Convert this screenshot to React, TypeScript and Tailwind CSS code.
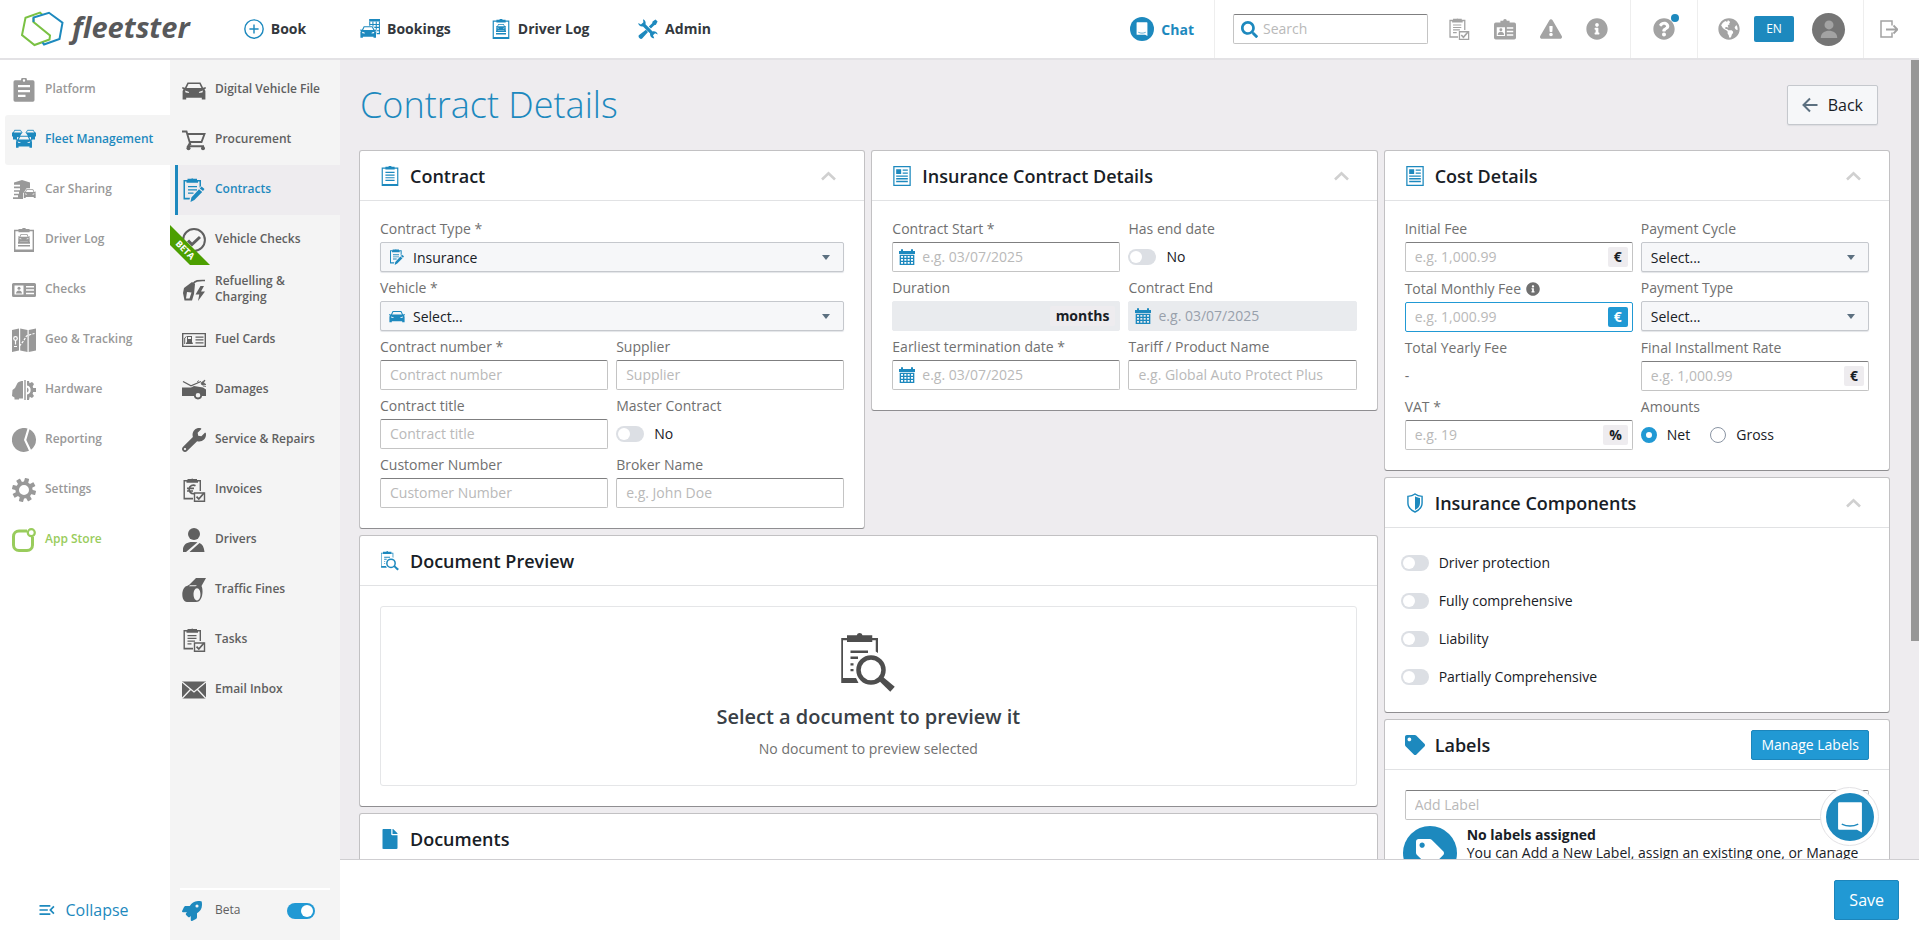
import { useId, useState, type ReactNode } from "react";
import {
  FaExclamationTriangle,
  FaFile,
  FaGlobeAmericas,
  FaInfoCircle,
  FaQuestionCircle,
  FaRocket,
  FaSearch,
  FaTag,
  FaWrench,
} from "react-icons/fa";
import { MdMenuOpen } from "react-icons/md";

interface IconProps {
  className?: string;
}

function Svg({ className = "size-6", children }: { className?: string; children: ReactNode }) {
  return (
    <svg className={`shrink-0 ${className}`} viewBox="0 0 24 24" fill="currentColor" aria-hidden="true">
      {children}
    </svg>
  );
}

const CAR_PATH =
  "M5.5 4.5h13l2.6 5.3 2.6-.7v1.7l-1.2.5.9 1.7v8.5h-3.6v-1.8H4.2v1.8H.6V13l.9-1.7-1.2-.5V9.1l2.6.7zM6.5 6 4.6 9.9h14.8L17.5 6zM3 12.6l.6 2 3.6.4-.6-1.3zM21 12.6l-.6 2-3.6.4.6-1.3z";

function CarIcon({ className }: IconProps) {
  return (
    <Svg className={className}>
      <path fillRule="evenodd" d={CAR_PATH} />
    </Svg>
  );
}

function FleetIcon({ className }: IconProps) {
  return (
    <Svg className={className}>
      <path d="M2.500 2.300h6l1.500 2.500M15.500 2.300h6M14 4.800l1.500-2.500M1.200 5l1.500-2.700M22.800 5l-1.500-2.700" fill="none" stroke="currentColor" strokeWidth=".9" />
      <path d="M0 4.500h10.500L9 6.500 7.500 9.500 5 9v2.500H1V9L0 8zM24 4.500H13.500L15 6.500l1.500 3 2.500-.500v2.500h4V9l1-1z" />
      <path fillRule="evenodd" transform="translate(3.600 4.600) scale(.7)" d={CAR_PATH} />
    </Svg>
  );
}

function BookingsIcon({ className }: IconProps) {
  return (
    <Svg className={className}>
      <path d="M11 0h13v3H11z" />
      <path d="M11.700 3v6M23.300 3v15M15.500 3v6M19.500 3v15M11 6.500h12.500M11 10h12.500M18 14h6M18 17.500h6" fill="none" stroke="currentColor" strokeWidth="1.3" />
      <path d="M0 11 4 8h11l5 5v10H0z" fill="#fff" />
      <path fillRule="evenodd" transform="translate(0 5) scale(.82)" d={CAR_PATH} />
    </Svg>
  );
}

function CarSharingIcon({ className }: IconProps) {
  return (
    <Svg className={className}>
      <path d="M2 4.500 10 2l8 2.500v5.700h-3.500l-2.500 4-1 1V21H1v-1.800h5v-2H2v-1.500h5v-2H2v-1.500h6v-2H2V8.500h6v-1.700H2z" />
      <path fillRule="evenodd" transform="translate(11.500 8.800) scale(.52)" d={CAR_PATH} />
    </Svg>
  );
}

function ClipboardSolidIcon({ className }: IconProps) {
  return (
    <Svg className={className}>
      <path fillRule="evenodd" d="M3.500 2.200H9a3 3 0 0 1 6 0h5.500A1.800 1.800 0 0 1 22.500 4v18a1.800 1.800 0 0 1-2 1.800h-17a1.800 1.800 0 0 1-2-1.800V4a1.800 1.800 0 0 1 2-1.800zM12 1.300a1.200 1.200 0 1 0 0 2.400 1.200 1.200 0 0 0 0-2.400zM6 7v2.300h12V7zm0 5v2.300h12V12zm0 4.800v2.300h7.500v-2.300z" />
    </Svg>
  );
}

/* Outlined clipboard, the base of many icons in the menus */
function ClipBase({ narrow = false }: { narrow?: boolean }) {
  return narrow ? (
    <path d="M1.500 2h4V.900h3.700a1.500 1.500 0 0 1 2 0H15V2h4v11h-1.400V3.500H16v1.300H4.500V3.500H2.900v16.300H11v1.700H1.500z" />
  ) : (
    <path fillRule="evenodd" d="M2 1.800h4.500V1H10a2.200 2.200 0 0 1 4 0h3.500v.800H22V24H2zM3.400 3.300v18.200h17.200V3.300h-3v1H6.500v-1z" />
  );
}

function ClipboardIcon({ className }: IconProps) {
  return (
    <Svg className={className}>
      <ClipBase />
      <path d="M6.500 7h11v1.400h-11zm0 3.200h11v1.400h-11zm0 3.200h11v1.400h-11zm0 3.200h11V18h-11z" />
    </Svg>
  );
}

function DriverLogIcon({ className }: IconProps) {
  return (
    <Svg className={className}>
      <ClipBase />
      <path fillRule="evenodd" transform="translate(6 3.800) scale(.5)" d={CAR_PATH} />
      <path d="M6 14h12v1.700H6zm0 2.900h12v1.700H6z" />
    </Svg>
  );
}

function ContractIcon({ className }: IconProps) {
  return (
    <Svg className={className}>
      <path d="M1.500 2h4V.800h3.600a1.500 1.500 0 0 1 2.200 0H15V2h4v6l-1.500 1.700V3.500H16v1.200H4.500V3.500H3v16.300h5l-.500 1.800h-6z" />
      <path d="M6 8h9v1.300H6zm0 3.200h9v1.300H6zm0 3.200h5.500v1.300H6z" />
      <path d="m19.500 8.500 3 2.500-1.500 2-3.200-2.600zM17 11.300l3.200 2.600-7.800 8-3.900 2 .900-4.500z" />
    </Svg>
  );
}

function TasksIcon({ className }: IconProps) {
  return (
    <Svg className={className}>
      <ClipBase narrow />
      <path d="M5.500 7h9v1.300h-9zm0 2.700h9V11h-9zm0 2.700h7.500v1.300h-7.500zm0 2.800h4v1.300h-4z" />
      <path d="M12.500 15h10v8.300h-10z" fill="none" stroke="currentColor" strokeWidth="1.400" />
      <path d="m14.500 18.600 2.300 2.400 5.200-6" fill="none" stroke="currentColor" strokeWidth="1.800" />
    </Svg>
  );
}

function InvoiceIcon({ className }: IconProps) {
  return (
    <Svg className={className}>
      <ClipBase narrow />
      <path d="M13.500 7.700a4.300 4.300 0 1 0-1.500 8M5 10.300h7M5 13h6" fill="none" stroke="currentColor" strokeWidth="1.700" />
      <path d="M12.500 15h10v8.300h-10z" fill="none" stroke="currentColor" strokeWidth="1.400" />
      <path d="m14.500 18.600 2.300 2.400 5.200-6" fill="none" stroke="currentColor" strokeWidth="1.800" />
    </Svg>
  );
}

function PreviewIcon({ className }: IconProps) {
  return (
    <Svg className={className}>
      <path d="M1.300 2h2.300V.900h3.900a1.200 1.200 0 0 1 2.300 0h3.900V2H16v6l-.900-.600V2.900h-1.400v.700H3.600v-.700H2V18h5.200l1 2H1.300z" />
      <path d="M5 7h7v1H5zm0 2.400h3v1H5zm0 2.700h1.200v.900H5zm0 2.300h1.200v.900H5z" />
      <circle cx="13.200" cy="14.800" r="5" fill="none" stroke="currentColor" strokeWidth="1.800" />
      <path d="m16.300 19 1.600-1.500 4.800 4-1.800 2z" />
    </Svg>
  );
}

function IdCardIcon({ className }: IconProps) {
  return (
    <Svg className={className}>
      <path fillRule="evenodd" d="M1.500 5h21A1.500 1.500 0 0 1 24 6.500v11a1.500 1.500 0 0 1-1.500 1.500h-21A1.500 1.500 0 0 1 0 17.500v-11A1.500 1.500 0 0 1 1.500 5zM2.500 7.500v9h9v-9zM14 8v1.500h8V8zm0 3.300v1.500h8v-1.500zm0 3.400v1.500h8v-1.500z" />
      <circle cx="7" cy="10.300" r="1.500" />
      <path d="M4 15.500c0-4 6-4 6 0z" />
    </Svg>
  );
}

function BadgeIcon({ className }: IconProps) {
  return (
    <Svg className={className}>
      <path fillRule="evenodd" d="M2 5h5V3h3a2 2 0 0 1 4 0h3v2h5a2 2 0 0 1 2 2v14.500a2 2 0 0 1-2 2H2a2 2 0 0 1-2-2V7a2 2 0 0 1 2-2zm1 5v9.500h9V10zm11 0v1.600h7V10zm0 3.900v1.600h7v-1.600zm0 3.900v1.600h7v-1.600z" />
      <circle cx="7.500" cy="12.800" r="1.600" />
      <path d="M4 18.500c0-4.500 7-4.500 7 0z" />
    </Svg>
  );
}

function MapIcon({ className }: IconProps) {
  return (
    <Svg className={className}>
      <path d="m0 2 7-1.500v22L0 24zM8.200.500 15.500 2v22l-7.300-1.500zM16.700 2 24 .500v22L16.700 24z" />
      <circle cx="3.500" cy="10.500" r="1.800" fill="none" stroke="#fff" strokeWidth="1.200" />
      <path d="M3.500 12.300v4.200M2 18.500h3" stroke="#fff" strokeWidth="1.200" />
      <path d="m7.500 18 4-5 3-5 4-1.500 4-1" fill="none" stroke="#fff" strokeWidth="1.200" strokeDasharray="2.500 1.200" />
    </Svg>
  );
}

function HardwareIcon({ className }: IconProps) {
  return (
    <Svg className={className}>
      <path d="M11 3v17.500H7v1H2.500v-2L0 18l.500-6L3 10l2.500-5C7 3.500 9 3 11 3zM12.300 2h1.400v20h-1.400z" />
      <path fillRule="evenodd" d="M15 3h2l.500 2.300L20 4l2 2-1.300 2.500L21.200 10H24v4h-2.800l-.600 1.700L22 18l-2 2-2.300-1.200L17 22h-2v-5.500a4.600 4.600 0 0 0 0-9z" />
      <path d="M15 9.500a2.700 2.700 0 0 1 0 5z" />
    </Svg>
  );
}

function PieIcon({ className }: IconProps) {
  return (
    <Svg className={className}>
      <path d="M15.500.500A12 12 0 1 0 17 22.800L12 12zM17.500 1.300A12 12 0 0 1 19 21.700L14.300 12z" />
    </Svg>
  );
}

function GearIcon({ className }: IconProps) {
  return (
    <Svg className={className}>
      <circle cx="12" cy="12" r="6.800" fill="none" stroke="currentColor" strokeWidth="3.600" />
      {[15, 60, 105, 150, 195, 240, 285, 330].map((angle) => (
        <rect key={angle} x="9.800" y="0" width="4.400" height="5" rx=".6" transform={`rotate(${angle} 12 12)`} />
      ))}
    </Svg>
  );
}

function AppStoreIcon({ className }: IconProps) {
  return (
    <Svg className={className}>
      <path d="M15 3H7a5.500 5.500 0 0 0-5.500 5.500V17A5.500 5.500 0 0 0 7 22.500h8a5.500 5.500 0 0 0 5.500-5.500V9" fill="none" stroke="currentColor" strokeWidth="3" />
      <circle cx="19.300" cy="4.700" r="3.500" fill="none" stroke="currentColor" strokeWidth="2.200" />
    </Svg>
  );
}

function CartIcon({ className }: IconProps) {
  return (
    <Svg className={className}>
      <path d="M0 3.500h4.500l4 13.500M6 6h16.500l-3 8H8M8.500 14 6 18.200h16" fill="none" stroke="currentColor" strokeWidth="1.900" />
      <circle cx="6.500" cy="20.300" r="2" />
      <circle cx="21" cy="20.300" r="2" />
    </Svg>
  );
}

function CheckCircleIcon({ className }: IconProps) {
  return (
    <Svg className={className}>
      <circle cx="12" cy="12" r="10.900" fill="none" stroke="currentColor" strokeWidth="2" />
      <path d="m6 12.500 4 4L18 9" fill="none" stroke="currentColor" strokeWidth="3" />
    </Svg>
  );
}

function FuelIcon({ className }: IconProps) {
  return (
    <Svg className={className}>
      <path d="M11 6c2-3.500 5-3.700 12-3.500" fill="none" stroke="currentColor" strokeWidth="1.600" />
      <path fillRule="evenodd" d="m2 10 8-6 3 2-1 10-2 6.500H2.500L1 15zm3 4-1 6.500h3.500l2-6z" />
      <path d="m18.500 8-5 8.500h3.800L16 23l7-9.500h-4l3-5.500z" />
    </Svg>
  );
}

function FuelCardIcon({ className }: IconProps) {
  return (
    <Svg className={className}>
      <path fillRule="evenodd" d="M0 5h24v14H0zm1.400 1.300v11.400h21.200V6.300zM5 8h5v6.500h.800V16H4v-1.500h1zm1 1v2h3V9zM13.500 8.500h8v1.300h-8zm0 2.800h8v1.300h-8zm0 2.900h8v1.300h-8z" />
      <path d="M4.500 8.500 2.700 10v6" fill="none" stroke="currentColor" />
    </Svg>
  );
}

function DamageIcon({ className }: IconProps) {
  return (
    <Svg className={className}>
      <path d="m1 3.500 8 4.300 10-4.300" fill="none" stroke="currentColor" strokeWidth="1.300" />
      <path d="M0 9.500h9L12 8l9 1.500 3 2v6.500h-4.600a3.500 3.500 0 0 0-7 0H0z" />
      <circle cx="16" cy="17.300" r="3.200" fill="#f4f4f4" stroke="currentColor" strokeWidth="1.800" />
      <path d="m19 5 4-3-1.500 3L24 6.500l-4 .500zM15 4l2-1.500M21 8l3 .500" stroke="currentColor" strokeWidth=".8" />
    </Svg>
  );
}

function DriverIcon({ className }: IconProps) {
  return (
    <Svg className={className}>
      <circle cx="12" cy="6" r="6" />
      <path d="M1 20.500C2 15.500 6 13.500 12 14l3.500.300L4 24H1zM17.500 15c3 1 4.500 4 5 9H7.500z" />
    </Svg>
  );
}

function FinesIcon({ className }: IconProps) {
  return (
    <Svg className={className}>
      <path fillRule="evenodd" d="M7.500 6.500 14 0h10l-4.500 8c2 3.500 1.500 16-5.500 16H5c-6.500 0-6-15 0-16zM8 7.200h7l-1.500 1.100H7zM15 10.200c-4.600 0-4.600 12.300 0 12.300s4.600-12.300 0-12.300z" />
    </Svg>
  );
}

function MailIcon({ className }: IconProps) {
  return (
    <Svg className={className}>
      <path d="M0 3.500h24v17H0z" />
      <path d="m0 4 12 10L24 4M0 20.500l8.500-9M24 20.500l-8.500-9" fill="none" stroke="#f4f4f4" strokeWidth="1.300" />
    </Svg>
  );
}

function NewsIcon({ className }: IconProps) {
  return (
    <Svg className={className}>
      <path fillRule="evenodd" d="M1.500 0h21v24h-21zM3 1.500v21h18v-21z" />
      <path d="M5 4h6v5.500H5zm7.800.200H19v1.600h-6.200zm0 3.500H19v1.600h-6.200zM5 11.300h14v1.700H5zm0 3.200h14v1.700H5zm0 3.300h14v1.700H5z" />
    </Svg>
  );
}

function CalendarIcon({ className }: IconProps) {
  return (
    <Svg className={className}>
      <path d="M0 3h3V.500h3V3h12V.500h3V3h3v4.500H0z" />
      <path fillRule="evenodd" d="M1 8.500h22V24H1zm2 2V13h3v-2.500zm5 0V13h3v-2.500zm5 0V13h3v-2.500zm5 0V13h3v-2.500zM3 15v2.500h3V15zm5 0v2.500h3V15zm5 0v2.500h3V15zm5 0v2.500h3V15zM3 19.500V22h3v-2.500zm5 0V22h3v-2.500zm5 0V22h3v-2.500zm5 0V22h3v-2.500z" />
    </Svg>
  );
}

function ShieldIcon({ className }: IconProps) {
  return (
    <Svg className={className}>
      <path d="M12 1.200c2.500 2 5 2.700 8.500 2.800v8c0 5-3.500 8.500-8.500 10.800C7 20.500 3.500 17 3.500 12V4C7 3.900 9.500 3.200 12 1.200z" fill="none" stroke="currentColor" strokeWidth="1.700" />
      <path d="M12 4c1.800 1.200 3.500 1.700 6 2v6c0 4-2.500 6.500-6 8.300z" />
    </Svg>
  );
}

function BookIcon({ className }: IconProps) {
  return (
    <Svg className={className}>
      <circle cx="12" cy="12" r="11" fill="none" stroke="currentColor" strokeWidth="1.700" />
      <path d="M12 6.500v11M6.500 12h11" stroke="currentColor" strokeWidth="1.700" />
    </Svg>
  );
}

function AdminIcon({ className }: IconProps) {
  return (
    <Svg className={className}>
      <path d="M6 .300C8.500 1.200 9.800 3.800 9 6.400L17.500 15c2.500-.800 5.300.600 6.200 3.500L20.500 17 18 19.500l1.500 3.500c-3 0-5.500-2.500-5-5.700L6 9C3.200 9.600.500 7.800.300 4.800L3.500 6.500 6.500 4z" />
      <path d="m21 .500 2.500 2.500-2 3.800-2 .700-4 4-2.500-2.500 4-4 .500-2zM9.500 13l2.500 2.500-7 8c-2 1.500-5.500-1.800-4-4z" />
    </Svg>
  );
}

function ChatGlyph({ className }: IconProps) {
  return (
    <Svg className={className}>
      <path fill="#fff" d="M6.200 4h11.600a.7.700 0 0 1 .7.700V20.500L15.800 19H6.200a.7.700 0 0 1-.7-.7V4.700a.7.700 0 0 1 .7-.7z" />
      <path d="M7.500 15.900c3 1.400 6 1.400 9 0" fill="none" stroke="#1d89be" strokeWidth=".8" />
    </Svg>
  );
}

function Logo() {
  return (
    <a href="#" className="flex items-center gap-2" aria-label="fleetster">
      <svg className="h-9 w-11" viewBox="0 0 44 36" fill="none" strokeWidth="2" aria-hidden="true">
        <path d="M22 3.500 20 1.600 5.500 6.800 2 24l12.500 10 15-5.500.500-4L13.500 11V7" stroke="#7ac143" />
        <path d="M13.500 11V6.500L29 1.800l13.500 10L39.500 28l-15.500 5.500-1.500-2" stroke="#1d89be" />
      </svg>
      <span className="pb-1 text-[29px] leading-8 font-bold text-[#58595b] italic">fleetster</span>
    </a>
  );
}

const topNav = [
  { label: "Book", icon: BookIcon },
  { label: "Bookings", icon: BookingsIcon },
  { label: "Driver Log", icon: DriverLogIcon },
  { label: "Admin", icon: AdminIcon },
];

const mainMenu = [
  { label: "Platform", icon: ClipboardSolidIcon },
  { label: "Fleet Management", icon: FleetIcon, active: true },
  { label: "Car Sharing", icon: CarSharingIcon },
  { label: "Driver Log", icon: DriverLogIcon },
  { label: "Checks", icon: IdCardIcon },
  { label: "Geo & Tracking", icon: MapIcon },
  { label: "Hardware", icon: HardwareIcon },
  { label: "Reporting", icon: PieIcon },
  { label: "Settings", icon: GearIcon },
];

const subMenu = [
  { label: "Digital Vehicle File", icon: CarIcon },
  { label: "Procurement", icon: CartIcon },
  { label: "Contracts", icon: ContractIcon, active: true },
  { label: "Vehicle Checks", icon: CheckCircleIcon, beta: true },
  { label: "Refuelling & Charging", icon: FuelIcon, wrap: true },
  { label: "Fuel Cards", icon: FuelCardIcon },
  { label: "Damages", icon: DamageIcon },
  { label: "Service & Repairs", icon: FaWrench },
  { label: "Invoices", icon: InvoiceIcon },
  { label: "Drivers", icon: DriverIcon },
  { label: "Traffic Fines", icon: FinesIcon },
  { label: "Tasks", icon: TasksIcon },
  { label: "Email Inbox", icon: MailIcon },
];

function Header() {
  return (
    <header className="flex h-[60px] shrink-0 items-center border-b-2 border-[#e3e2e5] bg-white">
      <div className="w-[210px] shrink-0 pl-5">
        <Logo />
      </div>
      <nav className="flex">
        {topNav.map(({ label, icon: Icon }) => (
          <a
            key={label}
            href="#"
            className="flex min-w-[130px] items-center justify-center gap-[7px] px-5 text-[14px] font-bold whitespace-nowrap text-[#33383d]"
          >
            <Icon className="size-5 text-[#1d89be]" />
            <span className="pb-0.5">{label}</span>
          </a>
        ))}
      </nav>

      <div className="ml-auto flex h-full items-stretch">
        <button className="flex items-center gap-[7px] pr-5 text-[14px] font-bold text-[#1d89be]">
          <span className="flex size-6 items-center justify-center rounded-full bg-[#1d89be]">
            <ChatGlyph className="size-5" />
          </span>
          Chat
        </button>
        <div className="flex items-center border-l border-[#eeeeee] pr-[22px] pl-[18px]">
          <div className="relative flex items-center">
            <FaSearch className="absolute left-2 size-[17px] text-[#1d89be]" />
            <input
              type="search"
              aria-label="Search"
              placeholder="Search"
              className="h-[30px] w-[195px] rounded-[2px] border border-[#c4c4c4] border-t-[#7f7f80] pb-0.5 pl-[29px] text-[14px] outline-none placeholder:text-[#b9b9b9]"
            />
          </div>
          <div className="ml-5 flex gap-6 text-[#a3a3a3]">
            <button aria-label="Tasks">
              <TasksIcon className="size-[22px]" />
            </button>
            <button aria-label="Licence checks">
              <BadgeIcon className="size-[22px]" />
            </button>
            <button aria-label="Alerts">
              <FaExclamationTriangle className="size-[22px]" />
            </button>
            <button aria-label="Information">
              <FaInfoCircle className="size-[22px]" />
            </button>
          </div>
        </div>
        <div className="flex items-center border-l border-[#eeeeee] px-[22px] text-[#a3a3a3]">
          <button aria-label="Help" className="relative">
            <FaQuestionCircle className="size-[22px]" />
            <span className="absolute -top-1 -right-1 size-2 rounded-full bg-[#1d89be]" />
          </button>
        </div>
        <div className="flex items-center border-l border-[#eeeeee] pr-[18px] pl-5">
          <FaGlobeAmericas className="size-[22px] text-[#a3a3a3]" />
          <button className="ml-[14px] h-[26px] w-10 rounded-[2px] bg-[#1d89be] text-[12px] text-white">EN</button>
          <button
            aria-label="Profile"
            className="ml-[18px] flex size-[33px] items-center justify-center rounded-full bg-[#757575] text-[#a3a3a3]"
          >
            <Svg className="size-[18px]">
              <circle cx="12" cy="6.500" r="6" />
              <path d="M1 24c0-13 22-13 22 0z" />
            </Svg>
          </button>
        </div>
        <div className="flex items-center border-l border-[#eeeeee] pr-[21px] pl-4 text-[#a3a3a3]">
          <button aria-label="Log out">
            <svg className="size-[18px]" viewBox="0 0 18 18" fill="none" stroke="currentColor" strokeWidth="1.500" aria-hidden="true">
              <path d="M12 5.500V1H1v16h11v-4.500" />
              <path d="M6 9.500h11M13.500 5.500l4 4-4 4" strokeWidth="1.800" />
            </svg>
          </button>
        </div>
      </div>
    </header>
  );
}

function Sidebar() {
  const [beta, setBeta] = useState(true);

  return (
    <aside className="flex shrink-0 text-[12px] leading-4 font-semibold">
      <div className="flex w-[170px] flex-col bg-white">
        <nav className="pt-[5px] pl-[5px]">
          {mainMenu.map(({ label, icon: Icon, active }) => (
            <a
              key={label}
              href="#"
              className={`flex h-[50px] items-center gap-[9px] rounded-l-[3px] pl-[7px] ${
                active ? "bg-[#f4f4f4] text-[#1d89be]" : "text-[#999999]"
              }`}
            >
              <Icon className="size-6" />
              <span className="pb-0.5">{label}</span>
            </a>
          ))}
          <a href="#" className="flex h-[50px] items-center gap-[9px] pl-[7px] text-[#99cc5c]">
            <AppStoreIcon className="size-6" />
            <span className="pb-0.5">App Store</span>
          </a>
        </nav>
        <button className="mt-auto flex h-[60px] items-center justify-center gap-2 pr-1 text-[16px] font-normal text-[#1d89be]">
          <MdMenuOpen className="size-5" />
          Collapse
        </button>
      </div>

      <div className="flex w-[170px] flex-col bg-[#f4f4f4]">
        <nav className="pt-[5px]">
          {subMenu.map(({ label, icon: Icon, active, beta: isBeta, wrap }) => (
            <a
              key={label}
              href="#"
              className={`relative flex h-[50px] items-center gap-[9px] overflow-hidden ${
                active
                  ? "ml-[5px] border-l-[3px] border-[#1d89be] bg-[#eeecef] pl-1 text-[#1d89be]"
                  : "pl-3 text-[#606060]"
              }`}
            >
              <Icon className="size-6 shrink-0" />
              <span className={`pb-0.5 ${wrap ? "w-20" : ""}`}>{label}</span>
              {isBeta && (
                <svg className="absolute top-2.5 left-0 h-10 w-10" viewBox="0 0 40 40" aria-hidden="true">
                  <path d="M0 0 40 40H20L0 20z" fill="#4c9f00" />
                  <text x="15" y="28" transform="rotate(45 15 25)" textAnchor="middle" fontSize="9" fontWeight="700" fill="#fff">
                    BETA
                  </text>
                </svg>
              )}
            </a>
          ))}
        </nav>
        <div className="mx-2.5 mt-auto flex h-[52px] items-center border-t-2 border-white pr-[15px] pb-2 pl-0.5 font-normal">
          <FaRocket className="size-5 text-[#1d89be]" />
          <label htmlFor="beta-switch" className="ml-[13px] flex-1 pb-0.5 text-[#606060]">
            Beta
          </label>
          <Switch id="beta-switch" checked={beta} onChange={setBeta} />
        </div>
      </div>
    </aside>
  );
}

interface SwitchProps {
  id: string;
  checked?: boolean;
  onChange?: (checked: boolean) => void;
}

function Switch({ id, checked, onChange }: SwitchProps) {
  return (
    <input
      id={id}
      type="checkbox"
      role="switch"
      checked={checked}
      onChange={(e) => onChange?.(e.target.checked)}
      className="h-4 w-7 shrink-0 appearance-none rounded-full bg-[#dcdfe4] p-0.5 before:block before:size-3 before:rounded-full before:bg-white before:content-[''] checked:bg-[#2199d4] checked:before:ml-3"
    />
  );
}

interface CardProps {
  title: string;
  icon: ReactNode;
  action?: ReactNode;
  children?: ReactNode;
  bodyClass?: string;
}

function Card({ title, icon, action, children, bodyClass = "p-5" }: CardProps) {
  return (
    <section className="rounded-[2px] bg-white shadow-[0_1px_0_0_#8f8e91,0_0_0_1px_#c2c1c3]">
      <header className="flex h-[50px] items-center border-b border-[#e1e2e4] px-5">
        <span className="flex w-5 justify-start text-[#1d89be]">{icon}</span>
        <h2 className="ml-2.5 flex-1 text-[18px] leading-6 font-semibold text-[#182026]">{title}</h2>
        {action}
      </header>
      <div className={bodyClass}>{children}</div>
    </section>
  );
}

function Chevron() {
  return (
    <button aria-label="Collapse section" className="mr-2 text-[#d0d0d0]">
      <svg className="h-2.5 w-[15px]" viewBox="0 0 15 10" fill="none" stroke="currentColor" strokeWidth="2.600" aria-hidden="true">
        <path d="m1 8.500 6.500-6.300L14 8.500" />
      </svg>
    </button>
  );
}

function FieldLabel({ id, children }: { id?: string; children: ReactNode }) {
  return (
    <label htmlFor={id} className="mb-[5px] block text-[14px] leading-4 text-[#707070]">
      {children}
    </label>
  );
}

interface FieldProps {
  label: string;
  placeholder?: string;
  date?: boolean;
  unit?: string;
  disabled?: boolean;
  focused?: boolean;
  info?: boolean;
}

function Field({ label, placeholder, date, unit, disabled, focused, info }: FieldProps) {
  const id = useId();
  const box = disabled
    ? "border-[#e9ebee] bg-[#e9ebee] placeholder:text-[#98a0ab]"
    : focused
      ? "border-[#2199d4] placeholder:text-[#b9b9b9]"
      : "border-[#c4c4c4] border-t-[#7f7f80] placeholder:text-[#b9b9b9]";

  return (
    <div>
      <FieldLabel id={id}>
        {info ? (
          <span className="flex h-[17px] items-center gap-[5px]">
            {label} <FaInfoCircle className="size-3.5 text-[#707070]" />
          </span>
        ) : (
          label
        )}
      </FieldLabel>
      <div className="relative">
        {date && <CalendarIcon className="absolute top-[7px] left-[7px] size-4 text-[#1d89be]" />}
        <input
          id={id}
          type="text"
          placeholder={placeholder}
          disabled={disabled}
          className={`h-[30px] w-full rounded-[2px] border pr-2 pb-0.5 text-[14px] outline-none ${date ? "pl-[29px]" : "pl-[9px]"} ${box}`}
        />
        {unit && (
          <span
            className={`absolute top-[5px] right-[5px] h-5 rounded-[2px] px-1.5 text-[14px] leading-5 font-bold ${
              focused ? "bg-[#2199d4] text-white" : "bg-[#eeecef] text-[#182026]"
            }`}
          >
            {unit}
          </span>
        )}
      </div>
    </div>
  );
}

function SelectField({ label, value, icon }: { label: string; value: string; icon?: ReactNode }) {
  const id = useId();
  return (
    <div>
      <FieldLabel id={id}>{label}</FieldLabel>
      <div className="relative">
        {icon && <span className="pointer-events-none absolute top-[7px] left-[9px] text-[#1d89be]">{icon}</span>}
        <select
          id={id}
          className={`block h-[30px] w-full appearance-none rounded-[2px] border border-[#c5c8cd] bg-[#f6f7f9] text-[14px] text-[#182026] shadow-[0_1px_1px_0_#e3e5e8] ${
            icon ? "pl-8" : "pl-[9px]"
          }`}
        >
          <option>{value}</option>
        </select>
        <span className="pointer-events-none absolute top-[13px] right-3.5 border-x-4 border-t-5 border-x-transparent border-t-[#5c7080]" />
      </div>
    </div>
  );
}

function SwitchField({ label }: { label: string }) {
  const id = useId();
  const [on, setOn] = useState(false);
  return (
    <div>
      <FieldLabel id={id}>{label}</FieldLabel>
      <div className="flex h-[30px] items-center gap-2.5">
        <Switch id={id} checked={on} onChange={setOn} />
        <span className="pb-0.5 text-[14px] text-[#182026]">{on ? "Yes" : "No"}</span>
      </div>
    </div>
  );
}

function ComponentSwitch({ label }: { label: string }) {
  const id = useId();
  const [on, setOn] = useState(false);
  return (
    <div className="flex h-[38px] items-center gap-2.5">
      <Switch id={id} checked={on} onChange={setOn} />
      <label htmlFor={id} className="pb-0.5 text-[14px] text-[#182026]">
        {label}
      </label>
    </div>
  );
}

function AmountsField() {
  const [amount, setAmount] = useState("Net");
  return (
    <fieldset>
      <legend className="mb-[5px] text-[14px] leading-4 text-[#707070]">Amounts</legend>
      <div className="flex h-[30px] items-center gap-5">
        {["Net", "Gross"].map((option) => (
          <label key={option} className="flex items-center gap-2.5 text-[14px] text-[#182026]">
            <input
              type="radio"
              name="amounts"
              checked={amount === option}
              onChange={() => setAmount(option)}
              className="size-4 appearance-none rounded-full border border-[#8a94a3] bg-white checked:border-5 checked:border-[#2199d4]"
            />
            <span className="pb-0.5">{option}</span>
          </label>
        ))}
      </div>
    </fieldset>
  );
}

export default function App() {
  return (
    <div className="flex h-screen flex-col overflow-hidden bg-[#eeecef] font-['Open_Sans',sans-serif]">
      <Header />
      <div className="flex min-h-0 flex-1">
        <Sidebar />
        <div className="relative flex min-w-0 flex-1 flex-col">
          <main className="min-h-0 flex-1 overflow-hidden pr-[30px] pl-5">
            <div className="flex h-[91px] items-center justify-between pr-[11px] pb-0.5">
              <h1 className="text-[36px] font-light text-[#1d89be]">Contract Details</h1>
              <button className="flex h-10 items-center gap-2.5 rounded-[2px] border border-[#c5c8cd] bg-[#f6f7f9] px-3.5 text-[16px] text-[#182026] shadow-[0_1px_1px_0_#dcdde0]">
                <svg className="size-4" viewBox="0 0 16 16" fill="none" stroke="#5c7080" strokeWidth="2" aria-hidden="true">
                  <path d="M15.500 8H1.500M8 1.500 1.500 8 8 14.500" />
                </svg>
                Back
              </button>
            </div>

            <div className="grid grid-cols-3 items-start gap-2">
              <div className="col-span-2 grid grid-cols-2 items-start gap-2">
                <Card title="Contract" icon={<ClipboardIcon className="size-5" />} action={<Chevron />}>
                  <div className="grid grid-cols-2 gap-2">
                    <div className="col-span-2">
                      <SelectField label="Contract Type *" value="Insurance" icon={<ContractIcon className="size-4" />} />
                    </div>
                    <div className="col-span-2">
                      <SelectField label="Vehicle *" value="Select..." icon={<CarIcon className="size-4" />} />
                    </div>
                    <Field label="Contract number *" placeholder="Contract number" />
                    <Field label="Supplier" placeholder="Supplier" />
                    <Field label="Contract title" placeholder="Contract title" />
                    <SwitchField label="Master Contract" />
                    <Field label="Customer Number" placeholder="Customer Number" />
                    <Field label="Broker Name" placeholder="e.g. John Doe" />
                  </div>
                </Card>

                <Card title="Insurance Contract Details" icon={<NewsIcon className="size-5" />} action={<Chevron />}>
                  <div className="grid grid-cols-2 gap-2">
                    <Field label="Contract Start *" placeholder="e.g. 03/07/2025" date />
                    <SwitchField label="Has end date" />
                    <Field label="Duration" unit="months" disabled />
                    <Field label="Contract End" placeholder="e.g. 03/07/2025" date disabled />
                    <Field label="Earliest termination date *" placeholder="e.g. 03/07/2025" date />
                    <Field label="Tariff / Product Name" placeholder="e.g. Global Auto Protect Plus" />
                  </div>
                </Card>

                <div className="col-span-2">
                  <Card title="Document Preview" icon={<PreviewIcon className="size-5" />}>
                    <div className="flex h-[180px] flex-col items-center justify-center rounded-[3px] border border-[#e5e6e8]">
                      <PreviewIcon className="size-[60px] text-[#4e4e4e]" />
                      <h3 className="mt-2.5 text-[20px] leading-7 font-semibold text-[#394046]">
                        Select a document to preview it
                      </h3>
                      <p className="mt-2 text-[14px] leading-5 text-[#707070]">No document to preview selected</p>
                    </div>
                  </Card>
                </div>
                <div className="col-span-2">
                  <Card title="Documents" icon={<FaFile className="size-5" />}>
                    <div className="h-20" />
                  </Card>
                </div>
              </div>

              <div className="flex flex-col gap-2">
                <Card title="Cost Details" icon={<NewsIcon className="size-5" />} action={<Chevron />}>
                  <div className="grid grid-cols-2 gap-2">
                    <Field label="Initial Fee" placeholder="e.g. 1,000.99" unit="€" />
                    <SelectField label="Payment Cycle" value="Select..." />
                    <Field label="Total Monthly Fee" placeholder="e.g. 1,000.99" unit="€" focused info />
                    <SelectField label="Payment Type" value="Select..." />
                    <div className="text-[14px] text-[#707070]">
                      <p className="mb-[5px] leading-4">Total Yearly Fee</p>
                      <p className="leading-[30px]">-</p>
                    </div>
                    <Field label="Final Installment Rate" placeholder="e.g. 1,000.99" unit="€" />
                    <Field label="VAT *" placeholder="e.g. 19" unit="%" />
                    <AmountsField />
                  </div>
                </Card>

                <Card
                  title="Insurance Components"
                  icon={<ShieldIcon className="size-5" />}
                  action={<Chevron />}
                  bodyClass="p-4"
                >
                  <ComponentSwitch label="Driver protection" />
                  <ComponentSwitch label="Fully comprehensive" />
                  <ComponentSwitch label="Liability" />
                  <ComponentSwitch label="Partially Comprehensive" />
                </Card>

                <Card
                  title="Labels"
                  icon={<FaTag className="size-5" />}
                  action={
                    <button className="h-[30px] rounded-[2px] border border-[#1c85bb] bg-[#2199d4] px-[9px] text-[14px] text-white">
                      Manage Labels
                    </button>
                  }
                >
                  <input
                    type="text"
                    aria-label="Add Label"
                    placeholder="Add Label"
                    className="block h-[30px] w-full rounded-[2px] border border-[#c4c4c4] border-t-[#7f7f80] pb-0.5 pl-[9px] text-[14px] outline-none placeholder:text-[#b9b9b9]"
                  />
                  <div className="mt-1.5 -ml-0.5 flex gap-2.5">
                    <span className="flex size-[54px] shrink-0 items-center justify-center rounded-full bg-[#1d89be] text-white">
                      <FaTag className="size-7" />
                    </span>
                    <p className="text-[14px] leading-[18px] text-[#182026]">
                      <strong className="block font-bold">No labels assigned</strong>
                      You can Add a New Label, assign an existing one, or Manage Labels
                    </p>
                  </div>
                </Card>
              </div>
            </div>
          </main>

          {/* Scrollbar thumb */}
          <div className="absolute top-0 right-0 h-[581px] w-2 bg-[#979797]" />

          <button
            aria-label="Open chat"
            className="absolute right-10 bottom-[94px] flex size-[59px] items-center justify-center rounded-full border border-[#e3e2e5] bg-white"
          >
            <span className="flex size-12 items-center justify-center rounded-full bg-[#1d89be]">
              <ChatGlyph className="size-11" />
            </span>
          </button>

          <footer className="flex h-[81px] shrink-0 items-center justify-end border-t border-[#cfced1] bg-white pr-5">
            <button className="h-10 rounded-[2px] border border-[#1c85bb] bg-[#2199d4] px-3.5 text-[16px] text-white">
              Save
            </button>
          </footer>
        </div>
      </div>
    </div>
  );
}
